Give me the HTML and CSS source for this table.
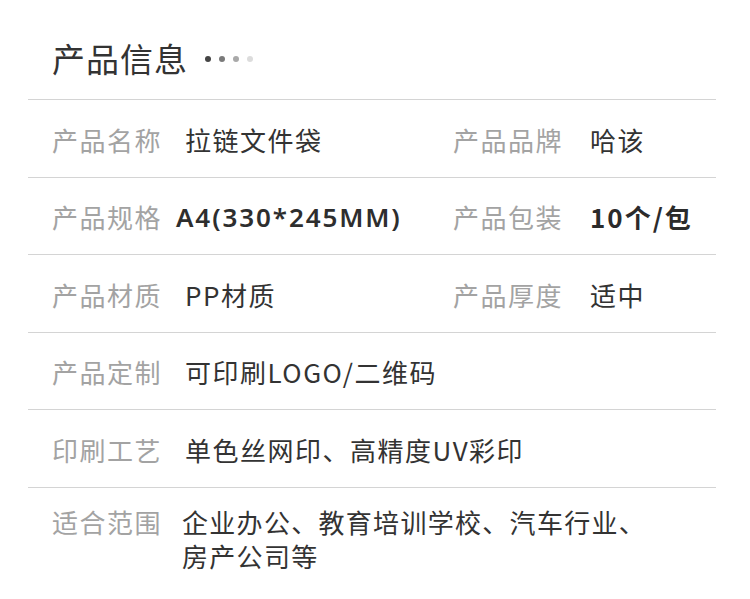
FILE: index.html
```html
<!DOCTYPE html>
<html lang="zh-CN">
<head>
<meta charset="utf-8">
<title>产品信息</title>
<link rel="stylesheet" href="styles.css">
</head>
<body>
<div class="panel">
  <div class="title-row">
    <h1 class="title">产品信息</h1>
    <div class="dots"><span class="dot d1"></span><span class="dot d2"></span><span class="dot d3"></span><span class="dot d4"></span></div>
  </div>
  <div class="row">
    <div class="cell"><span class="label">产品名称</span><span class="value">拉链文件袋</span></div>
    <div class="cell"><span class="label">产品品牌</span><span class="value">哈该</span></div>
  </div>
  <div class="row">
    <div class="cell"><span class="label">产品规格</span><span class="value latin">A4(330*245MM)</span></div>
    <div class="cell"><span class="label">产品包装</span><span class="value strong">10个/包</span></div>
  </div>
  <div class="row">
    <div class="cell"><span class="label">产品材质</span><span class="value">PP材质</span></div>
    <div class="cell"><span class="label">产品厚度</span><span class="value">适中</span></div>
  </div>
  <div class="row">
    <div class="cell wide"><span class="label">产品定制</span><span class="value">可印刷LOGO/二维码</span></div>
  </div>
  <div class="row">
    <div class="cell wide"><span class="label">印刷工艺</span><span class="value">单色丝网印、高精度UV彩印</span></div>
  </div>
  <div class="row last">
    <div class="cell wide"><span class="label">适合范围</span><span class="value multi">企业办公、教育培训学校、汽车行业、<br>房产公司等</span></div>
  </div>
</div>
</body>
</html>
```
FILE: styles.css
```css
html, body {
  margin: 0;
  padding: 0;
  background: #fff;
}
body {
  font-family: "Noto Sans CJK SC", "Noto Sans", sans-serif;
  color: #333;
}
.panel {
  margin-left: 28px;
  width: 688px;
}
.title-row {
  display: flex;
  align-items: center;
  box-sizing: border-box;
  height: 100px;
  padding-left: 24px;
  padding-top: 16px;
  border-bottom: 1px solid #d4d4d4;
}
.title {
  margin: 0;
  font-size: 33px;
  font-weight: 400;
  color: #333;
  line-height: 40px;
  letter-spacing: 1px;
}
.dots {
  display: flex;
  gap: 8px;
  margin-left: 17px;
  margin-top: 2px;
}
.dot {
  width: 6px;
  height: 6px;
  border-radius: 50%;
}
.d1 { background: #454545; }
.d2 { background: #7a7a7a; }
.d3 { background: #a9a9a9; }
.d4 { background: #dcdcdc; }
.row {
  display: grid;
  grid-template-columns: 401px 1fr;
  padding: 22.6px 0 20px 24px;
  border-bottom: 1px solid #d4d4d4;
  line-height: 34px;
  font-size: 26px;
}
.row.last {
  border-bottom: none;
  padding-top: 17px;
}
.cell {
  display: flex;
  align-items: flex-start;
}
.cell.wide {
  grid-column: 1 / 3;
}
.label {
  color: #a3a3a3;
  width: 133px;
  flex: none;
  letter-spacing: 1.5px;
}
.cell + .cell .label {
  width: 137px;
}
.value {
  color: #333;
  letter-spacing: 1.5px;
}
.latin {
  font-family: "Noto Sans", "Open Sans", sans-serif;
  font-weight: 600;
  letter-spacing: 1.9px;
  margin-left: -9px;
  color: #2e2e2e;
}
.strong {
  font-weight: 700;
  letter-spacing: 2px;
  color: #2b2b2b;
}
.multi {
  margin-left: -3px;
  letter-spacing: 1.3px;
}
```
